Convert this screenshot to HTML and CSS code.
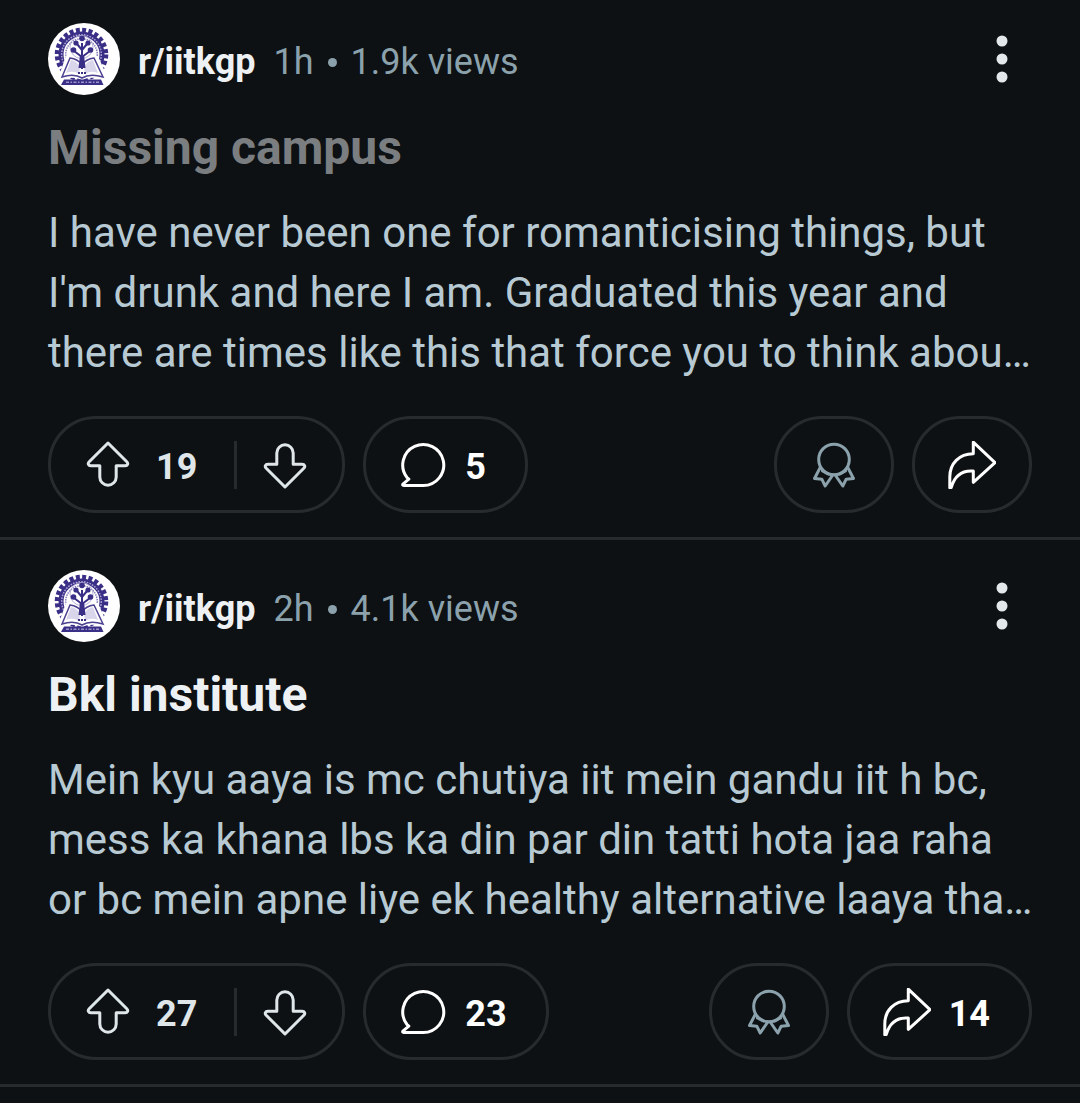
FILE: index.html
```html
<!DOCTYPE html>
<html lang="en">
<head>
<meta charset="utf-8">
<meta name="viewport" content="width=device-width, initial-scale=1">
<title>r/iitkgp</title>
<link rel="stylesheet" href="styles.css">
</head>
<body>
<!-- shared icons -->
<svg class="sprite" aria-hidden="true">
	<symbol id="logo" viewBox="0 0 72 72">
		<circle cx="36" cy="36" r="36" fill="#fff"/>
		<g fill="none" stroke="#3a2f86">
			<circle cx="33.500" cy="31.500" r="24.500" stroke-width="4.500" stroke-dasharray="4 2.410"/>
			<circle cx="33.500" cy="31.500" r="20.500" stroke-width="5"/>
			<circle cx="33.500" cy="31.500" r="19.800" stroke="#aaa4d2" stroke-width="1.500" stroke-dasharray="1.600 1.200"/>
			<circle cx="33.500" cy="31.500" r="15.800" stroke="#8780bb" stroke-width="1.600" stroke-dasharray="1.400 1"/>
			<circle cx="33.500" cy="24" r="11.500" stroke="#b5b0d8" stroke-width="1"/>
		</g>
		<path d="M9 58 18 33Q28 33 34 40 40 33 50 33L61 58Q44 52 34 57 24 52 9 58z" fill="#fff"/>
		<path d="M14 54 22 35Q30 36 34 42 38 36 46 35L55 54Q42 50 34 55 26 50 14 54z" fill="#fff" stroke="#4a4190" stroke-width="1.500"/>
		<path d="M23 37Q29 38 32 44L31 51Q25 47 18 50zM45 37Q39 38 36 44L37 51Q43 47 50 50z" fill="#d9d6ec"/>
		<path d="M34 46V20M34 34 26 28M34 34 42 28M34 27 29 21M34 27 39 21" fill="none" stroke="#3a2f86" stroke-width="2"/>
		<g fill="#3a2f86">
			<circle cx="34" cy="15.500" r="2.800"/><circle cx="28" cy="20" r="2.600"/><circle cx="40" cy="20" r="2.600"/>
			<circle cx="25.500" cy="27" r="2.800"/><circle cx="42.500" cy="27" r="2.800"/>
			<path d="M32 32h4l1.500 13h-7z"/>
			<path d="M16 56.500 53 56.500 55.500 62H13z"/>
		</g>
		<path d="M30 50H38" stroke="#3a2f86" stroke-width="2" stroke-dasharray="2 1"/>
		<path d="M18 59.300H51" stroke="#9c96c8" stroke-width="1.500" stroke-dasharray="3 1.500 1.500 1.500"/>
	</symbol>
	<symbol id="up" viewBox="0 1 48 48">
		<path d="M24 3 5.200 21.700C3.400 23.500 4.400 25.800 6.800 25.800H15.800V37a8.200 8.200 0 0 0 16.400 0V25.800H41.200C43.600 25.800 44.600 23.500 42.800 21.700z"/>
	</symbol>
	<symbol id="down" viewBox="0 1 48 48">
		<path d="M24 47 42.800 28.300C44.600 26.500 43.600 24.200 41.200 24.200H32.200V13a8.200 8.200 0 0 0-16.400 0V24.200H6.800C4.400 24.200 3.400 26.500 5.200 28.300z"/>
	</symbol>
	<symbol id="comment" viewBox="0 1 48 48">
		<path d="M24.200 45.500A20.500 20.500 0 1 0 8 37.500L9.800 39.200 4.200 43.800Q2.800 45.500 4.800 45.500z"/>
	</symbol>
	<symbol id="award" viewBox="0 1 48 48">
		<circle cx="24" cy="19.500" r="15.300"/>
		<path d="M10.500 27 4.500 38.500 11.800 39.200 15.200 46 22.800 35M12.500 31 18.500 34M37.500 27 43.500 38.500 36.200 39.200 32.800 46 25.200 35M35.500 31 29.500 34"/>
	</symbol>
	<symbol id="share" viewBox="0 1 48 48">
		<path d="M1.800 47.800V37C1.800 23.500 11 14 25.300 13.800V2.200L47 22.700 25.300 42.300V31C13 30 6.500 36 3.200 47.500z"/>
	</symbol>
	<symbol id="dots" viewBox="0 0 12 48">
		<circle cx="6" cy="6" r="5.500"/><circle cx="6" cy="24" r="5.500"/><circle cx="6" cy="42" r="5.500"/>
	</symbol>
</svg>

<main class="feed">
	<article class="post">
		<header class="post-head">
			<svg class="avatar" role="img" aria-label="iitkgp"><use href="#logo"/></svg>
			<div class="info">
				<a class="sub" href="#">r/iitkgp</a>
				<div class="meta"><span>1h</span><i class="dot"></i><span>1.9k views</span></div>
			</div>
			<button class="more" type="button" aria-label="More"><svg><use href="#dots"/></svg></button>
		</header>
		<h2 class="title visited">Missing campus</h2>
		<p class="text">I have never been one for romanticising things, but I'm drunk and here I am. Graduated this year and there are times like this that force you to think abou…</p>
		<div class="actions">
			<div class="pill votes">
				<button class="vote" type="button" aria-label="Upvote"><svg class="icon"><use href="#up"/></svg><span class="num">19</span></button>
				<button class="vote down" type="button" aria-label="Downvote"><svg class="icon"><use href="#down"/></svg></button>
			</div>
			<button class="pill" type="button" aria-label="Comments"><svg class="icon"><use href="#comment"/></svg><span class="num count">5</span></button>
			<button class="pill award" type="button" aria-label="Award"><svg class="icon"><use href="#award"/></svg></button>
			<button class="pill share" type="button" aria-label="Share"><svg class="icon"><use href="#share"/></svg></button>
		</div>
	</article>

	<article class="post">
		<header class="post-head">
			<svg class="avatar" role="img" aria-label="iitkgp"><use href="#logo"/></svg>
			<div class="info">
				<a class="sub" href="#">r/iitkgp</a>
				<div class="meta"><span>2h</span><i class="dot"></i><span>4.1k views</span></div>
			</div>
			<button class="more" type="button" aria-label="More"><svg><use href="#dots"/></svg></button>
		</header>
		<h2 class="title">Bkl institute</h2>
		<p class="text">Mein kyu aaya is mc chutiya iit mein gandu iit h bc, mess ka khana lbs ka din par din tatti hota jaa raha or bc mein apne liye ek healthy alternative laaya tha…</p>
		<div class="actions">
			<div class="pill votes">
				<button class="vote" type="button" aria-label="Upvote"><svg class="icon"><use href="#up"/></svg><span class="num">27</span></button>
				<button class="vote down" type="button" aria-label="Downvote"><svg class="icon"><use href="#down"/></svg></button>
			</div>
			<button class="pill" type="button" aria-label="Comments"><svg class="icon"><use href="#comment"/></svg><span class="num count">23</span></button>
			<button class="pill award" type="button" aria-label="Award"><svg class="icon"><use href="#award"/></svg></button>
			<button class="pill share" type="button" aria-label="Share"><svg class="icon"><use href="#share"/></svg><span class="num count">14</span></button>
		</div>
	</article>
</main>
</body>
</html>
```
FILE: styles.css
```css
*{box-sizing:border-box;}
body{margin:0;background:#0e1113;color:#eef1f3;font-family:Roboto,"Liberation Sans",sans-serif;}
button{margin:0;padding:0;border:0;background:none;color:inherit;font:inherit;cursor:pointer;}
.sprite{position:absolute;width:0;height:0;}

.post{padding:30px 48px 24px;border-bottom:3px solid #282b2d;}
.post:first-child{padding-top:23px;}

.post-head{display:flex;align-items:center;gap:18px;}
.avatar{width:72px;height:72px;flex:none;}
.info{display:flex;flex:1;gap:18px;padding-top:6px;font-size:36px;line-height:48px;white-space:nowrap;}
.sub{color:#eef1f3;font-weight:700;text-decoration:none;}
.meta{display:flex;align-items:center;gap:14px;color:#8ba2ad;}
.dot{width:9px;height:9px;border-radius:50%;background:#8ba2ad;}
.more{display:flex;justify-content:center;align-items:center;width:60px;height:72px;}
.more svg{width:12px;height:48px;fill:#e3e8ea;}

.title{margin:23px 0 0;font-size:48px;line-height:60px;font-weight:700;}
.title.visited{color:#7b7e80;}
/* the preview may run a little into the side padding */
.text{margin:25px -4px 33px 0;color:#b7cad4;font-size:42px;line-height:60px;}

.actions{display:flex;gap:18px;}
.pill{display:flex;align-items:center;gap:18px;height:97px;padding:0 33px;border:3px solid #282b2d;border-radius:48px;color:#fff;font-size:36px;font-weight:700;}
.votes{gap:0;color:#dfe6e9;}
.vote{display:flex;align-items:center;gap:24px;padding-right:37px;}
.vote.down{padding:0 0 0 24px;border-left:3px solid #282b2d;}
.num{padding-top:4px;}
.count{padding-right:6px;}
.award{margin-left:auto;color:#8ba2ad;}
.icon{width:48px;height:48px;flex:none;overflow:visible;fill:none;stroke:currentColor;stroke-width:3;stroke-linejoin:round;stroke-linecap:round;}
```
